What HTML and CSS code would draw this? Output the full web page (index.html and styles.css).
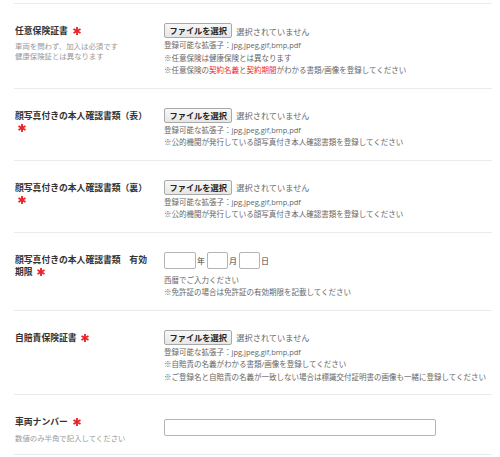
FILE: index.html
```html
<!DOCTYPE html>
<html lang="ja">
<head>
<meta charset="utf-8">
<title>登録フォーム</title>
<link rel="stylesheet" href="styles.css">
</head>
<body>
<div class="form">
  <div class="row">
    <div class="label">
      <div class="name">任意保険証書 <svg class="req" viewBox="0 0 8 8" aria-label="必須"><g stroke="#e8262a" stroke-width="1.9"><line x1="4" y1="0" x2="4" y2="8"/><line x1="0.5" y1="2" x2="7.5" y2="6"/><line x1="0.5" y1="6" x2="7.5" y2="2"/></g></svg></div>
      <div class="sub">車両を問わず、加入は必須です<br>健康保険証とは異なります</div>
    </div>
    <div class="field">
      <div class="file"><button type="button" class="btn">ファイルを選択</button><span class="status">選択されていません</span></div>
      <div class="help">
        <p>登録可能な拡張子：jpg,jpeg,gif,bmp,pdf</p>
        <p>※任意保険は健康保険とは異なります</p>
        <p>※任意保険の<span class="red">契約名義</span>と<span class="red">契約期間</span>がわかる書類/画像を登録してください</p>
      </div>
    </div>
  </div>

  <div class="row">
    <div class="label">
      <div class="name">顔写真付きの本人確認書類（表） <svg class="req" viewBox="0 0 8 8" aria-label="必須"><g stroke="#e8262a" stroke-width="1.9"><line x1="4" y1="0" x2="4" y2="8"/><line x1="0.5" y1="2" x2="7.5" y2="6"/><line x1="0.5" y1="6" x2="7.5" y2="2"/></g></svg></div>
    </div>
    <div class="field">
      <div class="file"><button type="button" class="btn">ファイルを選択</button><span class="status">選択されていません</span></div>
      <div class="help">
        <p>登録可能な拡張子：jpg,jpeg,gif,bmp,pdf</p>
        <p>※公的機関が発行している顔写真付き本人確認書類を登録してください</p>
      </div>
    </div>
  </div>

  <div class="row">
    <div class="label">
      <div class="name">顔写真付きの本人確認書類（裏） <svg class="req" viewBox="0 0 8 8" aria-label="必須"><g stroke="#e8262a" stroke-width="1.9"><line x1="4" y1="0" x2="4" y2="8"/><line x1="0.5" y1="2" x2="7.5" y2="6"/><line x1="0.5" y1="6" x2="7.5" y2="2"/></g></svg></div>
    </div>
    <div class="field">
      <div class="file"><button type="button" class="btn">ファイルを選択</button><span class="status">選択されていません</span></div>
      <div class="help">
        <p>登録可能な拡張子：jpg,jpeg,gif,bmp,pdf</p>
        <p>※公的機関が発行している顔写真付き本人確認書類を登録してください</p>
      </div>
    </div>
  </div>

  <div class="row">
    <div class="label">
      <div class="name">顔写真付きの本人確認書類　有効期限 <svg class="req" viewBox="0 0 8 8" aria-label="必須"><g stroke="#e8262a" stroke-width="1.9"><line x1="4" y1="0" x2="4" y2="8"/><line x1="0.5" y1="2" x2="7.5" y2="6"/><line x1="0.5" y1="6" x2="7.5" y2="2"/></g></svg></div>
    </div>
    <div class="field">
      <div class="date">
        <input type="text" class="box box-year"><span class="unit">年</span>
        <input type="text" class="box box-small"><span class="unit">月</span>
        <input type="text" class="box box-small"><span class="unit">日</span>
      </div>
      <div class="help">
        <p>西暦でご入力ください</p>
        <p>※免許証の場合は免許証の有効期限を記載してください</p>
      </div>
    </div>
  </div>

  <div class="row">
    <div class="label">
      <div class="name">自賠責保険証書 <svg class="req" viewBox="0 0 8 8" aria-label="必須"><g stroke="#e8262a" stroke-width="1.9"><line x1="4" y1="0" x2="4" y2="8"/><line x1="0.5" y1="2" x2="7.5" y2="6"/><line x1="0.5" y1="6" x2="7.5" y2="2"/></g></svg></div>
    </div>
    <div class="field">
      <div class="file"><button type="button" class="btn">ファイルを選択</button><span class="status">選択されていません</span></div>
      <div class="help">
        <p>登録可能な拡張子：jpg,jpeg,gif,bmp,pdf</p>
        <p>※自賠責の名義がわかる書類/画像を登録してください</p>
        <p>※ご登録名と自賠責の名義が一致しない場合は標識交付証明書の画像も一緒に登録してください</p>
      </div>
    </div>
  </div>

  <div class="row">
    <div class="label">
      <div class="name">車両ナンバー <svg class="req" viewBox="0 0 8 8" aria-label="必須"><g stroke="#e8262a" stroke-width="1.9"><line x1="4" y1="0" x2="4" y2="8"/><line x1="0.5" y1="2" x2="7.5" y2="6"/><line x1="0.5" y1="6" x2="7.5" y2="2"/></g></svg></div>
      <div class="sub sub-gap">数値のみ半角で記入してください</div>
    </div>
    <div class="field">
      <input type="text" class="box box-wide">
    </div>
  </div>
</div>
</body>
</html>
```

FILE: styles.css
```css
html, body {
  margin: 0;
  padding: 0;
  background: #fff;
}

body {
  font-family: "Open Sans", "Noto Sans CJK JP", sans-serif;
  color: #333;
}

.form {
  margin: 3px 0 0 14px;
  width: 478px;
  border-top: 1px solid #ebebeb;
}

.row {
  display: grid;
  grid-template-columns: 149px 1fr;
  padding: 19px 0 11px 1px;
  border-bottom: 1px solid #ebebeb;
}

.label {
  padding-top: 2px;
}

.name {
  width: 136px;
  font-size: 8.8px;
  font-weight: 700;
  line-height: 12px;
  color: #333;
}

.req {
  display: inline-block;
  width: 8px;
  height: 8px;
  margin-left: 2.5px;
  vertical-align: -1px;
}

.sub {
  margin-top: 4px;
  font-size: 7.4px;
  line-height: 10px;
  color: #999;
}

.sub-gap {
  margin-top: 5px;
}

.file {
  display: flex;
  align-items: center;
  height: 15px;
}

.btn {
  box-sizing: border-box;
  height: 15px;
  margin: 0;
  padding: 0 4.5px;
  font-family: inherit;
  font-size: 8.2px;
  font-weight: 700;
  line-height: 13px;
  color: #222;
  background: linear-gradient(#f8f8f8, #e6e6e6);
  border: 1px solid #a9a9a9;
  border-radius: 2px;
}

.status {
  margin-left: 4px;
  font-size: 8.2px;
  color: #666;
}

.help {
  margin-top: 1px;
}

.help p {
  margin: 0;
  font-size: 7.5px;
  line-height: 12.5px;
  color: #666;
  white-space: nowrap;
}

.red {
  color: #f02a2a;
}

.date {
  display: flex;
  align-items: center;
  height: 17px;
  margin-bottom: 5px;
}

.box {
  box-sizing: border-box;
  height: 17px;
  margin: 0;
  padding: 0 3px;
  border: 1px solid #b4b4b4;
  border-radius: 2px;
  background: #fff;
  font-family: inherit;
  font-size: 8px;
}

.box-year {
  width: 32px;
}

.box-small {
  width: 21px;
}

.box-wide {
  width: 272px;
}

.unit {
  margin: 0 2px 0 1px;
  font-size: 8px;
  color: #444;
}
```
